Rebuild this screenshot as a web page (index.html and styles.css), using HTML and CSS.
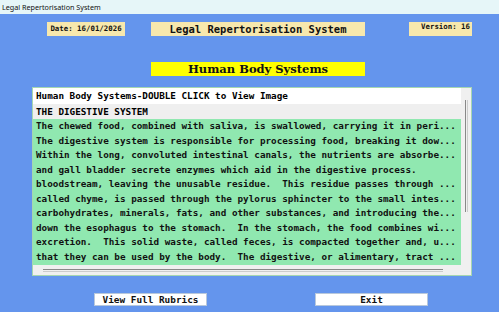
FILE: index.html
```html
<!DOCTYPE html>
<html lang="en">
<head>
    <meta charset="UTF-8">
    <title>Legal Repertorisation System</title>
    <link rel="stylesheet" href="styles.css">
</head>
<body>

<div class="titlebar">Legal Repertorisation System</div>

<div class="window">
    <div class="top-row">
        <div class="date-box">Date: 16/01/2026</div>
        <div class="title-box">Legal Repertorisation System</div>
        <div class="version-box">Version: 16</div>
    </div>

    <div class="banner">Human Body Systems</div>

    <div class="listbox">
        <div class="list-main">
            <div class="list-head">Human Body Systems-DOUBLE CLICK to View Image</div>
            <div class="list-sub">THE DIGESTIVE SYSTEM</div>
            <div class="list-body">
                <div class="row">The chewed food, combined with saliva, is swallowed, carrying it in peri...</div>
                <div class="row">The digestive system is responsible for processing food, breaking it dow...</div>
                <div class="row">Within the long, convoluted intestinal canals, the nutrients are absorbe...</div>
                <div class="row">and gall bladder secrete enzymes which aid in the digestive process.</div>
                <div class="row">bloodstream, leaving the unusable residue.  This residue passes through ...</div>
                <div class="row">called chyme, is passed through the pylorus sphincter to the small intes...</div>
                <div class="row">carbohydrates, minerals, fats, and other substances, and introducing the...</div>
                <div class="row">down the esophagus to the stomach.  In the stomach, the food combines wi...</div>
                <div class="row">excretion.  This solid waste, called feces, is compacted together and, u...</div>
                <div class="row">that they can be used by the body.  The digestive, or alimentary, tract ...</div>
            </div>
            <div class="hscroll"><div class="hthumb"></div></div>
        </div>
        <div class="vscroll"><div class="vthumb"></div></div>
    </div>

    <div class="buttons">
        <button class="btn btn-rubrics">View Full Rubrics</button>
        <button class="btn btn-exit">Exit</button>
    </div>
</div>

</body>
</html>
```

FILE: styles.css
```css
body {
    margin: 0;
    padding: 0;
    background-color: #6495ed;
    font-family: 'DejaVu Sans Mono', monospace;
    width: 499px;
    height: 312px;
    overflow: hidden;
}

.titlebar {
    height: 14px;
    line-height: 14px;
    padding-left: 2px;
    background-color: #e6f6f8;
    font-family: 'Noto Sans', sans-serif;
    font-size: 7.2px;
    color: #111;
}

.window {
    padding-top: 8px;
}

.top-row {
    display: flex;
    height: 14px;
}

.date-box,
.title-box,
.version-box {
    background-color: #f7e8ad;
    font-weight: bold;
    color: #111;
}

.date-box {
    margin-left: 47px;
    width: 78px;
    font-size: 7.4px;
    line-height: 14px;
    text-align: center;
}

.title-box {
    margin-left: 26px;
    width: 214px;
    font-size: 10.5px;
    line-height: 14px;
    text-align: center;
}

.version-box {
    margin-left: 44px;
    width: 63px;
    font-size: 7.4px;
    line-height: 10px;
    text-align: right;
    box-sizing: border-box;
    padding-right: 2px;
}

.banner {
    margin: 26px 0 0 151px;
    width: 214px;
    height: 14px;
    line-height: 14px;
    background-color: #ffff00;
    font-family: 'DejaVu Serif', serif;
    font-weight: bold;
    font-size: 11.5px;
    text-align: center;
    color: #111;
}

.listbox {
    margin: 11px 0 0 32px;
    width: 440px;
    height: 189px;
    box-sizing: border-box;
    border: 1px solid #a6d6b0;
    background-color: #f0f0f0;
    display: flex;
}

.list-main {
    width: 428px;
    display: flex;
    flex-direction: column;
}

.list-head {
    height: 16px;
    line-height: 16px;
    padding-left: 3px;
    background-color: #fff;
    font-size: 9.3px;
    font-weight: bold;
    white-space: pre;
}

.list-sub {
    height: 15px;
    line-height: 15px;
    padding-left: 3px;
    background-color: #efefef;
    font-size: 9.3px;
    font-weight: bold;
}

.list-body {
    background-color: #90e8b0;
    height: 146px;
}

.row {
    height: 14.5px;
    line-height: 14.5px;
    padding-left: 3px;
    font-size: 9.3px;
    font-weight: bold;
    white-space: pre;
    color: #111;
}

.hscroll {
    flex: 1;
    display: flex;
    align-items: center;
    padding-left: 10px;
}

.hthumb {
    width: 400px;
    height: 1px;
    border-top: 1px solid #888;
    border-bottom: 1px solid #ccc;
}

.vscroll {
    flex: 1;
    display: flex;
    justify-content: center;
    padding-top: 12px;
}

.vthumb {
    width: 1px;
    height: 112px;
    border-left: 1px solid #888;
    border-right: 1px solid #ccc;
}

.buttons {
    display: flex;
    margin-top: 17px;
}

.btn {
    width: 113px;
    height: 13px;
    padding: 0;
    background-color: #fff;
    border: 1px solid #b8c8dc;
    font-family: 'DejaVu Sans Mono', monospace;
    font-weight: bold;
    font-size: 9.4px;
    line-height: 11px;
    color: #111;
}

.btn-rubrics {
    margin-left: 94px;
}

.btn-exit {
    margin-left: 108px;
}
```
